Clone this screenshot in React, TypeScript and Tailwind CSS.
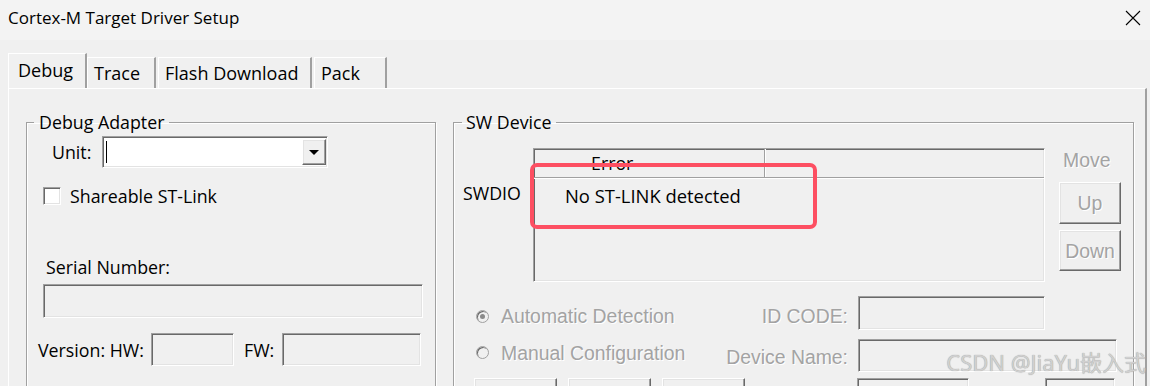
import type { ReactNode } from "react";

const UI = "font-['Open_Sans','Noto_Sans',sans-serif]";
const OLD = "font-['Liberation_Sans',Arial,sans-serif]";

// classic win32 3d edges
const SUNKEN =
  "border border-t-[#a0a0a0] border-l-[#a0a0a0] border-b-white border-r-white shadow-[inset_1px_1px_0_#696969,inset_-1px_-1px_0_#e3e3e3]";
const RAISED =
  "border border-t-white border-l-white border-b-[#696969] border-r-[#696969] shadow-[inset_-1px_-1px_0_#a0a0a0,inset_1px_1px_0_#e3e3e3]";
const GROUP =
  "border border-[#a0a0a0] shadow-[inset_1px_1px_0_#fff,1px_1px_0_#fff]";

function Disabled({ children, className = "" }: { children: ReactNode; className?: string }) {
  return (
    <span className={`${OLD} text-[19.4px] leading-[24px] text-[#a3a3a3] [text-shadow:1px_1px_0_#fff] ${className}`}>
      {children}
    </span>
  );
}

function Radio({ checked }: { checked?: boolean }) {
  return (
    <span className="w-[13px] h-[13px] rounded-full border border-[#a0a0a0] bg-[#f0f0f0] shadow-[inset_1px_1px_0_#696969] flex items-center justify-center flex-shrink-0">
      {checked && <span className="w-[5px] h-[5px] rounded-full bg-[#8a8a8a]" />}
    </span>
  );
}

function Tab({ label, active, width }: { label: string; active?: boolean; width: string }) {
  return (
    <div
      className={`${width} ${active ? "h-[35px] pt-[4px] pl-[9px]" : "h-[31px] pt-[3px] pl-[6px]"} border-l border-t border-white border-r-2 border-r-[#a0a0a0] text-[18px] leading-[24px]`}
    >
      {label}
    </div>
  );
}

export default function App() {
  return (
    <div className={`${UI} relative w-[1150px] h-[386px] overflow-hidden bg-[#f0f0f0] text-black`}>
      {/* title bar */}
      <div className="h-[40px] bg-[#f3f3f3] flex items-start justify-between pl-[8px] pr-[9px] pt-[7px]">
        <span className="text-[17px] leading-[22px]">Cortex-M Target Driver Setup</span>
        <svg width="16" height="16" viewBox="0 0 16 16" className="mt-[3px]">
          <path d="M1 1 L15 15 M15 1 L1 15" stroke="#000" strokeWidth="1.1" fill="none" />
        </svg>
      </div>

      {/* tabs */}
      <div className="h-[48px] flex items-end pl-[8px]">
        <Tab label="Debug" active width="w-[79px]" />
        <Tab label="Trace" width="w-[69px]" />
        <div className="w-[2px]" />
        <Tab label="Flash Download" width="w-[154px]" />
        <div className="w-[2px]" />
        <Tab label="Pack" width="w-[73px]" />
      </div>

      {/* tab page */}
      <div className="ml-[8px] w-[1139px] h-[298px] border-t border-l border-white border-r-2 border-r-[#a0a0a0] flex gap-[17px] pl-[17px] pt-[21px]">
        {/* Debug Adapter */}
        <fieldset className={`${GROUP} w-[410px] h-[300px] pl-[11px] flex-shrink-0`}>
          <legend className="-ml-[4px] px-[5px] text-[17.8px] leading-[24px]">Debug Adapter</legend>
          <div className="mt-[2px] flex items-center h-[32px]">
            <div className="w-[64px] pl-[14px] text-[17.8px] leading-[24px]">Unit:</div>
            <div className={`${SUNKEN} w-[226px] h-[32px] bg-white flex items-center justify-between pl-[3px] pr-[1px]`}>
              <span className="w-px h-[22px] bg-black" />
              <div className={`${RAISED} w-[24px] h-[26px] bg-[#f0f0f0] flex items-center justify-center`}>
                <svg width="10" height="5" viewBox="0 0 10 5">
                  <path d="M0 0 H10 L5 5 Z" fill="#000" />
                </svg>
              </div>
            </div>
          </div>

          <div className="mt-[16px] flex items-center ml-[5px]">
            <span className={`${SUNKEN} w-[18px] h-[18px] bg-white flex-shrink-0`} />
            <span className="ml-[9px] text-[17.8px] leading-[24px]">Shareable ST-Link</span>
          </div>

          <div className="mt-[47px] ml-[8px] text-[17.8px] leading-[24px]">Serial Number:</div>
          <div className={`${SUNKEN} mt-[5px] ml-[5px] w-[380px] h-[34px]`} />

          <div className="mt-[15px] flex items-center text-[17.8px] leading-[24px]">
            <span className="w-[113px]">Version: HW:</span>
            <div className={`${SUNKEN} w-[83px] h-[33px]`} />
            <span className="ml-[10px] w-[38px]">FW:</span>
            <div className={`${SUNKEN} w-[139px] h-[33px]`} />
          </div>
        </fieldset>

        {/* SW Device */}
        <fieldset className={`${GROUP} w-[681px] h-[300px] pl-[9px] flex-shrink-0`}>
          <legend className="-ml-[1px] px-[4px] text-[17.8px] leading-[24px]">SW Device</legend>

          <div className="mt-[14px] flex">
            <div className="w-[70px] pt-[33px] text-[17.8px] leading-[24px]">SWDIO</div>

            <div className={`${SUNKEN} relative w-[512px] h-[134px] bg-[#f0f0f0]`}>
              <div className="h-[29px] flex border-b border-b-[#a0a0a0] shadow-[0_1px_0_#fff]">
                <div className="w-[231px] border-r border-r-[#a0a0a0] shadow-[1px_0_0_#fff] pl-[57px] text-[17.8px] leading-[28px]">
                  Error
                </div>
              </div>
              <div className="pl-[31px] pt-[6px] text-[18.4px] leading-[24px]">No ST-LINK detected</div>

              {/* annotation box */}
              <div className="absolute left-[-4px] top-[14px] w-[287px] h-[66px] border-4 border-[#fd4f62] rounded-[7px]" />
            </div>

            <div className="ml-[14px] w-[62px] flex flex-col">
              <Disabled className="pl-[4px]">Move</Disabled>
              <div className={`${RAISED} mt-[10px] h-[42px] flex items-center justify-center`}>
                <Disabled>Up</Disabled>
              </div>
              <div className={`${RAISED} mt-[6px] h-[41px] flex items-center justify-center`}>
                <Disabled>Down</Disabled>
              </div>
            </div>
          </div>

          <div className="mt-[14px] flex items-center">
            <div className="w-[385px] flex items-center justify-between">
              <div className="flex items-center pl-[13px] mt-[6px]">
                <Radio checked />
                <Disabled className="ml-[12px]">Automatic Detection</Disabled>
              </div>
              <Disabled className="mt-[6px]">ID CODE:</Disabled>
            </div>
            <div className={`${SUNKEN} ml-[10px] w-[187px] h-[34px]`} />
          </div>

          <div className="mt-[9px] flex items-center">
            <div className="w-[385px] flex items-center justify-between">
              <div className="flex items-center pl-[13px] mb-[6px]">
                <Radio />
                <Disabled className="ml-[12px]">Manual Configuration</Disabled>
              </div>
              <Disabled className="mt-[2px]">Device Name:</Disabled>
            </div>
            <div className={`${SUNKEN} ml-[10px] w-[259px] h-[33px]`} />
          </div>

          <div className="mt-[6px] flex items-start">
            <div className="pl-[11px] flex gap-[11px]">
              <div className={`${RAISED} w-[83px] h-[30px]`} />
              <div className={`${RAISED} w-[83px] h-[30px]`} />
              <div className={`${RAISED} w-[83px] h-[30px]`} />
            </div>
            <div className={`${SUNKEN} ml-[112px] w-[112px] h-[30px]`} />
            <div className={`${SUNKEN} ml-[76px] w-[70px] h-[30px]`} />
          </div>
        </fieldset>
      </div>

      {/* watermark */}
      <div className="absolute right-[4px] top-[349px] font-['Noto_Sans','Noto_Sans_CJK_SC',sans-serif] text-[22px] leading-[26px] text-[#d0d0d0] [text-shadow:0_0_1px_#8f8f8f]">
        CSDN @JiaYu嵌入式
      </div>
    </div>
  );
}
